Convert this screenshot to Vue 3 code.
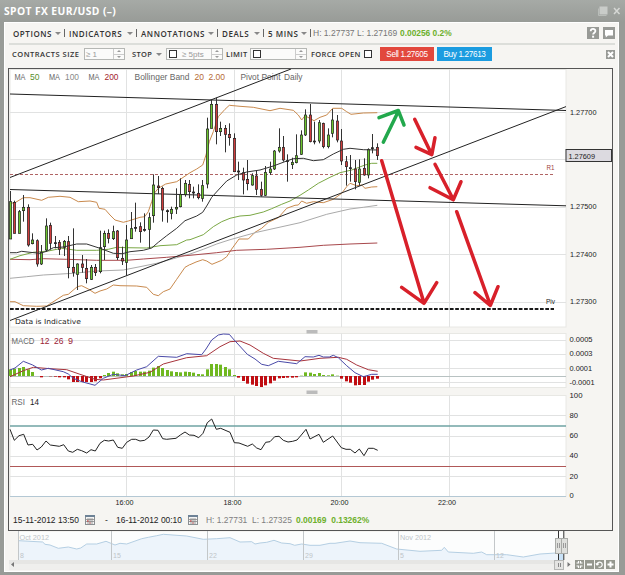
<script setup>
const STEP = 4.475
const FIRST = 10.5
const xAt = (i) => FIRST + STEP * i

// Converts traced samples (three units per pixel) to chart pixels.
const trace = (...parts) =>
  parts
    .map(([ox, oy, pts]) =>
      pts
        .split(' ')
        .map((p) => {
          const [x, y] = p.split(',').map(Number)
          return `${(ox + x / 3).toFixed(1)},${(oy + y / 3).toFixed(1)}`
        })
        .join(' ')
    )
    .join(' ')

// high, body top, body bottom, low, direction
const early = `3 35 147 147 u|32 37 130 130 d|60 65 130 130 u|15 52 62 95 u|43 52 165 170 d|130 150 161 163 u|148 152 222 230 d|165 187 222 225 u|85 108 180 185 u|98 106 160 178 d|138 158 161 175 n|150 157 178 195 d|150 154 172 198 u|138 155 233 265 d|115 232 247 260 d|220 222 253 300 u|195 222 232 248 d|207 235 266 280 d|225 232 268 270 u|222 232 248 258 d|122 173 245 250 u|122 130 170 210 u|118 130 145 160 d|107 125 146 150 u|120 123 203 210 d|170 205 213 225 d|105 150 217 257 u|66 116 146 146 u|38 112 115 125 n|97 110 125 158 d|70 118 121 125 n|68 83 118 175 u|-47 -15 77 98 u|-42 -12 -7 12 d|-10 -5 60 95 d|58 62 65 98 n|50 58 70 88 u|-5 52 57 72 u|-35 13 50 52 u|-30 -20 13 20 u|-30 -17 5 25 d|-10 6 9 25 n|-17 10 23 28 d`
const late = `345 362 400 410 u|158 192 357 370 u|105 118 190 190 u|98 118 200 238 d|170 190 200 213 u|180 190 208 262 d|175 208 218 242 d|205 220 320 320 d|290 318 321 345 n|308 323 345 388 d|285 343 356 376 d|325 332 360 362 u|318 333 373 390 d|350 373 391 395 d|303 322 391 393 u|290 312 323 330 u|255 258 312 315 u|190 247 258 263 u|213 247 285 290 d|268 287 290 350 n|278 292 299 312 u|208 272 293 295 u|196 210 268 270 u|133 150 210 213 u|117 150 230 232 d|170 228 231 238 n|165 173 228 235 u|173 175 245 250 d|190 210 245 250 u|132 165 205 217 u|150 168 225 232 d|192 228 288 300 d|273 290 305 362 d|270 308 311 350 n|285 312 350 373 d|283 312 352 362 u|280 310 330 332 d|250 253 330 340 u|207 248 251 265 n|235 247 272 285 d`
const parse = (src, base) =>
  src.split('|').map((row) => {
    const [h, t, b, l, dir] = row.split(' ')
    const y = (v) => base + v / 3
    return { h: y(h), t: y(t), b: y(b), l: y(l), dir }
  })
const candles = [...parse(early, 190), ...parse(late, 65)].map((c, i) => ({
  ...c,
  x: Math.round(xAt(i) - 0.5) + 0.5
}))

const upper = trace(
  [0, 190, '30,40 45,38 70,23 90,23 125,31 145,22 180,19 210,22 235,35 270,33 290,37 297,55 315,58 330,75 345,90 370,97 385,93 420,82 434,80 445,65 455,35 463,10'],
  [0, 65, '475,370 497,357 530,350 560,330'],
  [190, 65, '0,323 20,312 38,300 48,270 58,230 70,200 85,155 105,133 118,121 150,124 190,127 240,137 270,130 310,136 325,150 335,165 345,152 372,167 390,157 410,150 428,130 455,130 470,140 483,148 520,144 562,143']
)
const lower = trace(
  [0, 190, '30,335 45,335 70,347 110,349 140,348 190,316 205,313 232,290 245,287 265,297 285,310 300,303 320,297 340,285 360,287 410,288 440,292 460,313 475,317 490,305 510,297 530,268 555,232 569,224'],
  [190, 190, '0,224 18,216 38,209 50,213 66,223 95,211 110,200 125,177 147,147 175,147 195,127 215,115 235,97 265,83 290,55 315,46 325,45 335,33 350,40 370,35 400,38 430,28'],
  [190, 65, '455,385 470,365 480,355 500,362 515,360 525,370 545,366 562,365']
)
const ma20 = trace(
  [0, 190, '30,188 50,188 65,184 90,187 120,190 140,184 160,173 190,171 230,162 260,162 300,175 340,190 367,191 390,185 430,181 455,174 475,157 500,137 530,115 555,92'],
  [190, 190, '0,86 20,78 38,67 52,45 65,22'],
  [190, 65, '85,375 110,348 140,330 170,321 210,315 250,303 290,288 310,281 340,280 370,287 400,284 430,267 460,253 480,250 520,254 562,255']
)
const ma50 = trace(
  [0, 190, '30,208 60,197 100,187 145,183 185,175 230,181 290,181 325,178 350,172 380,173 440,174 480,167 530,164 560,150'],
  [190, 190, '0,149 40,134 70,110 95,95 120,85 150,78 180,76 220,66 245,56 275,43 300,33 330,16'],
  [190, 65, '355,375 385,355 420,337 450,323 485,315 525,300 545,295 562,295']
)
const ma100 = trace(
  [0, 190, '30,265 80,260 130,255 220,250 290,243 370,240 420,230 470,220 520,206'],
  [190, 190, '0,192 40,178 80,162 120,149 200,127 330,98 410,73 480,57 520,52 562,46']
)
const ma200 = trace(
  [0, 190, '30,208 90,209 130,206 200,208 290,211 380,211 430,207 500,202'],
  [190, 190, '0,196 80,188 140,181 230,178 330,172 400,166 480,162 562,159']
)
const macd = trace(
  [0, 325, '30,135 45,129 70,109 98,120 124,135 145,130 190,140 205,147 220,160 245,170 285,181 310,160 340,148 375,152 410,135 440,125 475,94 530,97 560,86 605,89 618,72 635,45 655,30 670,27 688,28 700,42 742,88 765,102 785,118 805,122 835,109 890,116 915,95'],
  [310, 325, '10,96 27,91 40,96 58,96 70,91 85,98 110,122 135,143 160,155 185,148 203,148']
)
const signal = trace(
  [0, 325, '30,155 70,137 100,127 150,131 200,134 240,148 285,163 310,165 400,153 450,142 490,117 560,98 620,92 660,65 690,50 720,48 750,60 790,85 820,100 900,108'],
  [310, 325, '0,104 30,100 85,97 110,103 140,120 175,134 203,139']
)
const rsi = trace(
  [0, 325, '30,313 43,346 57,332 71,328 84,360 98,358 111,375 124,366 138,348 151,360 178,364 191,359 205,378 218,382 232,373 245,377 260,384 273,374 286,378 300,355 313,346 326,348 340,345 353,367 367,370 380,352 395,343 407,343 420,348 434,346 447,336 460,315 474,316 488,341 500,343 528,340 541,330 555,321 568,330 582,331 596,338 609,325 622,293 635,282 649,313 662,310 690,322 703,353 717,354 743,364 757,357 770,369 783,374 797,352 810,350 824,335 837,334 850,346 864,351 878,349 891,345 904,330 918,313'],
  [310, 325, '0,342 27,328 40,352 68,333 94,368 108,373 121,373 135,384 148,372 162,392 175,370 190,370 203,376']
)
const navLine = trace(
  [0, 490, '57,152 128,156 135,163 150,165 175,175 205,171 230,177 242,174 260,162 290,162 318,154 345,165 360,160 380,162 425,146 445,142 470,137 490,133 560,138 610,148 650,146 690,143 720,156 755,155 765,162 780,159 800,157 822,151 845,159 870,161 884,166 905,162'],
  [310, 490, '0,166 30,166 60,160 75,160 120,153 150,158 215,160 260,177 330,184 395,181 403,172 415,186 490,190 515,186 530,194 590,194 640,201 690,192 752,188']
)

const histogram = [
  20, 22, 24, 27, 20, 12, 0, -4, 0, -1, -2, -4, -4, -10, -18, -18, -18, -18, -18, -16, -7, 3, 9, 13, 8, 5, 6,
  12, 15, 13, 13, 16, 25, 30, 24, 18, 14, 12, 11, 13, 12, 10, 6, 5, 20, 36, 36, 34, 27, 20, 3, -5, -15,
  -23, -26, -30, -33, -28, -22, -14, -7, -6, -5, -5, -4, 1, 11, 10, 6, 9, 3, 2, 5, 1, -8, -16, -20, -28, -27,
  -27, -17, -11, -8
].map((v, i) => ({
  x: Math.round(xAt(i) - 1.5),
  y: v > 0 ? 376 - v / 3 : 376,
  h: Math.abs(v) / 3,
  up: v > 0
}))

const verticals = [126.5, 234.5, 341.5, 449.5]
const panes = [
  { y: 69.5, h: 257.5, rows: [112.5, 159.5, 207.5, 254.5, 302.5] },
  { y: 333.5, h: 54, rows: [340.5, 354.5, 368.5, 382.5] },
  { y: 395.5, h: 101, rows: [415.5, 436.5, 456.5, 476.5] }
]
const axis = [
  [570, 115, 26.5, '1.27700'],
  [570, 209.3, 26.5, '1.27500'],
  [570, 256.8, 26.5, '1.27400'],
  [570, 304, 26.5, '1.27300'],
  [569.5, 342.2, 23, '0.0005'],
  [569.5, 356.3, 23, '0.0003'],
  [569.5, 370.7, 22.5, '0.0001'],
  [569.5, 385, 25, '-0.0001'],
  [569.5, 398.3, 13, '100'],
  [569.5, 418, 8.5, '80'],
  [569.5, 437.8, 8.5, '60'],
  [569.5, 458.3, 8.5, '40'],
  [569.5, 478.7, 8.5, '20'],
  [569.5, 498.4, 4.2, '0'],
  [115.5, 505.2, 18, '16:00'],
  [223.5, 505.2, 18, '18:00'],
  [330.5, 505.2, 18, '20:00'],
  [438, 505.2, 18, '22:00']
]
const legend = [
  [14.5, 80, 11, 'MA', '#666'],
  [30, 80, 9.5, '50', '#5a8f2c'],
  [49, 80, 11, 'MA', '#666'],
  [65, 80, 14, '100', '#8a8a8a'],
  [88.5, 80, 11, 'MA', '#666'],
  [104.5, 80, 14, '200', '#a3242c'],
  [134.5, 80, 55, 'Bollinger Band', '#666'],
  [194.5, 80, 9.5, '20', '#b56a35'],
  [208.5, 80, 16.5, '2.00', '#b56a35'],
  [240.5, 80, 40, 'Pivot Point', '#666'],
  [284, 80, 18.5, 'Daily', '#666'],
  [11.5, 343.8, 23, 'MACD', '#666'],
  [40, 343.8, 9.5, '12', '#9b2335'],
  [54, 343.8, 9.5, '26', '#9b2335'],
  [68, 343.8, 5, '9', '#9b2335'],
  [11.5, 404.6, 13.5, 'RSI', '#666'],
  [30, 404.6, 9, '14', '#222']
]
const arrows = [
  { color: '#22a84c', d: 'M383.3 142.3 398 112M379 117.7 398.3 110.5 404 125' },
  { color: '#d8202a', d: 'M414.7 119.3 431.5 154M416 147.3 431.8 154.6 435 137.7' },
  { color: '#d8202a', d: 'M435 164.3 453.3 199.5M430 187.7 453.3 199.8 461 181.7' },
  { color: '#d8202a', d: 'M381.7 160.7 424 303M401.7 287.3 424 303.3 436.7 282.7' },
  { color: '#d8202a', d: 'M456.7 211.7 490.3 305M475 292.7 490.3 305.5 498 286.7' }
]
const navMarks = [
  [18.5, '8'],
  [111.5, '15'],
  [207.5, '22'],
  [303.5, '29'],
  [398.5, '5'],
  [494.5, '12']
]
const menus = [
  ['OPTIONS', 'm1'],
  ['INDICATORS', 'm2'],
  ['ANNOTATIONS', 'm3'],
  ['DEALS', 'm4'],
  ['5 MINS', 'm5']
]
</script>

<template>
  <div class="window">
    <header class="title">
      <h1>SPOT FX EUR/USD (–)</h1>
      <svg class="win-icons" width="24" height="12" viewBox="0 0 24 12">
        <path d="M1.5 3.5v7h8" fill="none" stroke="#b9bdb9" />
        <rect x="2.5" y="1.5" width="8" height="8" fill="#c9ccc9" />
        <path d="M17 3l5.500 6M22.500 3 17 9" stroke="#d6d8d5" stroke-width="1.5" />
      </svg>
    </header>

    <main class="panel">
      <nav class="menu">
        <span v-for="[name, cls] in menus" :key="name" class="item" :class="cls">
          <span class="name">{{ name }}</span><i class="tri"></i>
        </span>
        <span class="quote">H: 1.27737 L: 1.27169</span>
        <b class="gain">0.00256 0.2%</b>
        <svg class="help" width="28" height="12" viewBox="0 0 28 12">
          <rect width="12" height="12" fill="#989a96" />
          <path d="M3.7 4.2C3.8 1.2 8.5 1.3 8.4 4 8.4 5.7 6.1 5.7 6.1 7.6" fill="none" stroke="#fff" stroke-width="1.8" />
          <rect x="5.1" y="8.7" width="2" height="2" fill="#fff" />
          <rect x="16" width="12" height="12" fill="#989a96" />
          <path d="M18 3h8v5.5h-5L18.8 10.5V8.5H18z" fill="#fff" />
        </svg>
      </nav>

      <div class="ticket">
        <span class="lab size">CONTRACTS SIZE</span>
        <span class="field f1"><span class="hint">≥ 1</span><i class="spin"></i></span>
        <span class="lab stop">STOP</span><i class="tri"></i>
        <span class="field f2"><i class="check"></i><span class="hint">≥ 5pts</span><i class="spin"></i></span>
        <span class="lab limit">LIMIT</span>
        <span class="field f3"><i class="check"></i><i class="spin"></i></span>
        <span class="lab force">FORCE OPEN</span>
        <i class="check big"></i>
        <button class="sell">Sell 1.27605</button>
        <button class="buy">Buy 1.27613</button>
        <svg class="shut" width="9" height="9" viewBox="0 0 9 9">
          <rect width="9" height="9" fill="#989a96" />
          <path d="M2 2l5 5M7 2 2 7" stroke="#fff" stroke-width="2" />
        </svg>
      </div>

      <section class="frame">
        <svg class="chart" width="603" height="441" viewBox="9 69 603 441">
          <g v-for="p in panes" :key="p.y">
            <rect x="10" :y="p.y" width="556" :height="p.h" fill="#fff" stroke="#e8e8e4" />
            <path
              :d="verticals.map((x) => `M${x} ${p.y}v${p.h}`).join('') + p.rows.map((y) => `M10 ${y}H566`).join('')"
              stroke="#e1e2e2"
            />
          </g>
          <rect x="306.5" y="330" width="11" height="3.5" fill="#bbb" />
          <rect x="306.5" y="390.5" width="11" height="3.5" fill="#bbb" />

          <text
            v-for="([x, y, w, label, fill], k) in legend"
            :key="'l' + k"
            class="legend"
            :x="x"
            :y="y"
            :fill="fill"
            :textLength="w"
            lengthAdjust="spacingAndGlyphs"
          >{{ label }}</text>

          <g fill="none">
            <path d="M10 174.5H554" stroke="#b06464" stroke-dasharray="3 2" />
            <path d="M10 309H554" stroke="#1a1a1a" stroke-width="2" stroke-dasharray="3.7 1.6" />
            <polyline :points="upper" stroke="#c98a4e" />
            <polyline :points="lower" stroke="#c98a4e" />
            <polyline :points="ma100" stroke="#aaa" />
            <polyline :points="ma200" stroke="#a8484c" />
            <polyline :points="ma50" stroke="#7ba845" />
            <path d="M10 94 566 110.5M10 177.5 291 69M10 189.5 566 205.8M10 320.5 566 106.6" stroke="#222" />
          </g>

          <g v-for="(c, i) in candles" :key="i" class="candle" :class="c.dir">
            <path :d="`M${c.x} ${c.h}V${c.l}`" />
            <rect :x="c.x - 1.15" :y="c.t" width="2.3" :height="c.b - c.t" />
          </g>
          <polyline :points="ma20" fill="none" stroke="#333" />

          <path d="M10 376.5H566" stroke="#b8c2c2" />
          <rect
            v-for="(b, i) in histogram"
            :key="'h' + i"
            :x="b.x"
            :y="b.y"
            width="3"
            :height="b.h"
            :fill="b.up ? '#6fb820' : '#c00d12'"
          />
          <g fill="none">
            <polyline :points="signal" stroke="#a8343c" />
            <polyline :points="macd" stroke="#4a4aa8" />
            <path d="M10 426H566" stroke="#6fa3a3" stroke-width="1.4" />
            <path d="M10 466.5H566" stroke="#b05858" stroke-width="1.2" />
            <path d="M10 496.5H566" stroke="#b4c8d4" />
            <polyline :points="rsi" stroke="#222" />
          </g>

          <g fill="none" stroke-width="3.5" stroke-linecap="round" stroke-linejoin="round">
            <path v-for="(a, k) in arrows" :key="'a' + k" :d="a.d" :stroke="a.color" />
          </g>

          <rect x="566" y="149.5" width="45.5" height="12" fill="#dcdae0" stroke="#333" />
          <text class="axis" x="568.5" y="158.6" textLength="26.5" lengthAdjust="spacingAndGlyphs">1.27609</text>
          <text
            v-for="([x, y, w, label], k) in axis"
            :key="'x' + k"
            class="axis"
            :x="x"
            :y="y"
            :textLength="w"
            lengthAdjust="spacingAndGlyphs"
          >{{ label }}</text>
          <text class="axis r1" x="546.5" y="170" textLength="8" lengthAdjust="spacingAndGlyphs">R1</text>
          <text class="axis" x="546" y="304.3" textLength="9" lengthAdjust="spacingAndGlyphs">Piv</text>
          <text class="note" x="15" y="323.7" textLength="66" lengthAdjust="spacingAndGlyphs">Data is Indicative</text>
        </svg>

        <div class="range">
          <span class="date d1">15-11-2012 13:50</span>
          <svg class="cal" width="10" height="10" viewBox="0 0 10 10">
            <rect x=".5" y=".5" width="9" height="9" fill="#f4f4f4" stroke="#8b8f92" />
            <path d="M0 1h10" stroke="#6d8296" stroke-width="2" />
            <path d="M1 4.5h8M1 6.5h8M3 3v6M5 3v6M7 3v6" stroke="#888" stroke-width=".8" />
            <path d="M2 6h1.5M4.500 8h1" stroke="#d33" stroke-width="1.2" />
          </svg>
          <span class="dash">-</span>
          <span class="date d2">16-11-2012 00:10</span>
          <svg class="cal" width="10" height="10" viewBox="0 0 10 10">
            <rect x=".5" y=".5" width="9" height="9" fill="#f4f4f4" stroke="#8b8f92" />
            <path d="M0 1h10" stroke="#6d8296" stroke-width="2" />
            <path d="M1 4.5h8M1 6.5h8M3 3v6M5 3v6M7 3v6" stroke="#888" stroke-width=".8" />
            <path d="M2 6h1.5M4.500 8h1" stroke="#d33" stroke-width="1.2" />
          </svg>
          <span class="hl">H: 1.27731&nbsp; L: 1.27325</span>
          <b class="gain2">0.00169&nbsp; 0.13262%</b>
        </div>
      </section>

      <svg class="navigator" width="608" height="40" viewBox="8 531 608 40">
        <rect x="18" y="532" width="545" height="28" fill="#fcfdfd" />
        <polygon :points="`18.5,560 ${navLine} 560,560`" fill="#edf4fb" />
        <polyline :points="navLine" fill="none" stroke="#b5cfe3" />
        <g v-for="[x, label] in navMarks" :key="label">
          <path :d="`M${x} 531V560`" stroke="#c3c7c9" />
          <text class="nav" :x="x + 1.5" y="557.5">{{ label }}</text>
        </g>
        <text class="nav" x="19.5" y="540.3" textLength="29.5" lengthAdjust="spacingAndGlyphs">Oct 2012</text>
        <text class="nav" x="400" y="540.3" textLength="31" lengthAdjust="spacingAndGlyphs">Nov 2012</text>
        <rect x="559" y="553" width="4.5" height="7" fill="#c9e2f7" />
        <path d="M558.5 531V560M563.8 531V560" stroke="#333" />
        <g fill="#dfe0dd" stroke="#a9aba8">
          <rect x="555.5" y="538.5" width="6" height="15" />
          <rect x="561.5" y="538.5" width="6" height="15" />
        </g>
        <path d="M557.5 543v5M559.5 543v5M563.5 543v5M565.5 543v5" stroke="#999" />
        <rect x="9" y="560" width="548" height="9.5" fill="#e6e6e4" />
        <rect x="9" y="564" width="548" height="5.5" fill="#efefed" />
        <path d="M14 562v5l-3-2.5z" fill="#777" />
        <rect x="554.5" y="560.5" width="9" height="9" fill="#e4e4e2" stroke="#b5b6b4" />
        <path d="M558.5 563v4M560.5 563v4" stroke="#888" />
        <path d="M567.5 562v5l3-2.5z" fill="#777" />
        <g fill="#96988f">
          <rect x="575" y="560" width="9" height="9" />
          <rect x="585" y="560" width="9" height="9" />
          <rect x="595" y="560" width="9" height="9" />
          <rect x="606" y="560" width="9" height="9" />
        </g>
        <g fill="none" stroke="#fff" stroke-width="1.2">
          <path d="M576.5 563h2v-2M582.5 563h-2v-2M576.5 566h2v2M582.5 566h-2v2" />
          <path d="M587 564.5h5" stroke-width="2" />
          <path d="M597 564.8a2.6 2.6 0 1 1 1.5 2.2M595.9 563.4l1.2 1.6 1.6-1.2" />
          <path d="M607.5 564.5h6M610.5 561.5v6" stroke-width="2" />
        </g>
      </svg>
    </main>
  </div>
</template>

<style>
body {
  margin: 0;
  background: #999c98;
}
</style>

<style scoped>
.window {
  box-sizing: border-box;
  width: 625px;
  height: 575px;
  padding: 0 6px 3px 4px;
  overflow: hidden;
  background: linear-gradient(#a6aaa6, #989b97 22px);
  display: flex;
  flex-direction: column;
  font-family: "Liberation Sans", sans-serif;
}
.title {
  flex: none;
  height: 22px;
  display: flex;
  justify-content: space-between;
  align-items: center;
}
h1 {
  margin: 0;
  font: bold 10.3px/20px "Open Sans", sans-serif;
  letter-spacing: 0.4px;
  color: #fff;
  white-space: nowrap;
}
.win-icons {
  margin: 0 -2px 1px 0;
}
.panel {
  flex: 1;
  background: #f6f5f2;
  border: 1px solid #fff;
  padding: 0 5px 0 3px;
}
.menu {
  height: 20px;
  display: flex;
  align-items: center;
  border-bottom: 2px solid #dcdeda;
  margin: 0 -2px 0 1px;
  font: 600 8px "Open Sans", sans-serif;
  color: #333;
  white-space: nowrap;
}
.item {
  box-sizing: border-box;
  display: flex;
  justify-content: space-between;
  align-items: center;
  height: 8px;
  border-right: 1px solid #666;
  padding: 0 3px 0 4px;
  letter-spacing: 0.55px;
}
.m1 { width: 56px; }
.m2 { width: 72px; }
.m3 { width: 81px; }
.m4 { width: 46px; }
.m5 { width: 47px; }
.tri {
  border: 3px solid transparent;
  border-top-color: #888;
  border-bottom: 0;
}
.quote {
  width: 84px;
  margin-left: 2px;
  font: 8.5px "Liberation Sans", sans-serif;
  color: #777;
}
.gain {
  margin-left: 3px;
  font: bold 8.4px "Liberation Sans", sans-serif;
  color: #6db02c;
}
.help {
  margin-left: auto;
}
.ticket {
  box-sizing: border-box;
  height: 23px;
  padding-bottom: 5px;
  display: flex;
  align-items: center;
  white-space: nowrap;
}
.lab {
  font: 600 7.5px "Open Sans", sans-serif;
  letter-spacing: 0.35px;
  color: #333;
}
.size { width: 71px; margin-left: 4px; letter-spacing: 0.5px; }
.stop { width: 24px; margin-left: 7px; }
.limit { width: 24px; margin-left: 3px; }
.force { width: 53px; margin-left: 4px; }
.field {
  box-sizing: border-box;
  height: 12px;
  border: 1px solid #b5b7b4;
  background: #fbfbfa;
  display: flex;
  align-items: center;
  font-size: 8px;
  color: #999;
}
.f1 { width: 41px; padding-left: 1px; margin-left: 1px; }
.f2 { width: 57px; margin-left: 4px; }
.f3 { width: 57px; }
.spin {
  position: relative;
  box-sizing: border-box;
  width: 11px;
  height: 10px;
  margin-left: auto;
  border-left: 1px solid #ccc;
  background: linear-gradient(#ccc, #ccc) 0 5px / 100% 1px no-repeat;
}
.spin::before,
.spin::after {
  content: "";
  position: absolute;
  left: 3px;
  border: 2px solid transparent;
}
.spin::before { top: -1px; border-bottom-color: #999; }
.spin::after { bottom: -1px; border-top-color: #999; }
.check {
  box-sizing: border-box;
  width: 8px;
  height: 8px;
  margin: 0 5px 0 2px;
  border: 1px solid #333;
  background: #fff;
}
.big { margin: 0; }
button {
  height: 14px;
  padding: 0;
  border: 0;
  color: #fff;
  font: 8.2px "Liberation Sans", sans-serif;
  letter-spacing: -0.35px;
}
.sell { width: 54px; margin-left: 8px; background: #e2483d; }
.buy { width: 55px; margin-left: 3px; background: #1c9ce0; }
.shut { margin-left: auto; margin-right: -2px; }
.frame {
  box-sizing: border-box;
  width: 605px;
  height: 463px;
  border: 1px solid #555;
}
.chart,
.navigator {
  display: block;
}
.legend { font-size: 8.5px; }
.axis { font-size: 7.4px; fill: #222; }
.r1 { fill: #a04040; }
.note { font: 7px "DejaVu Sans", sans-serif; fill: #222; }
.nav { font-size: 7px; fill: #bfc5c9; }
.candle path { stroke: #333; fill: none; }
.candle rect { stroke: #222; stroke-width: 0.7; }
.u rect { fill: #6cc52e; }
.d rect { fill: #d03c3c; }
.n rect { fill: #333; }
.range {
  height: 20px;
  display: flex;
  align-items: center;
  font-size: 8.45px;
  color: #222;
  white-space: nowrap;
}
.date { width: 69px; }
.d1 { margin-left: 4px; }
.cal { margin-left: 3px; }
.dash { width: 4px; margin-left: 10px; }
.d2 { margin-left: 7px; }
.hl { margin-left: 8px; width: 87px; color: #808080; }
.gain2 { margin-left: 3px; color: #6db02c; }
</style>
